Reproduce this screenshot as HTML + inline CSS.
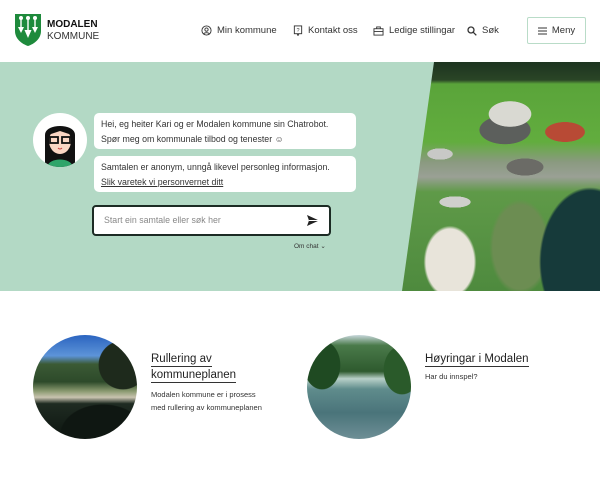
<!DOCTYPE html>
<html><head><meta charset="utf-8">
<style>
*{margin:0;padding:0;box-sizing:border-box}
body{width:600px;height:480px;background:#fff;font-family:"Liberation Sans",sans-serif;color:#222;position:relative;overflow:hidden}
.nav{position:absolute;top:25px;font-size:9.5px;color:#333;display:flex;align-items:center;gap:5px}
.hero{position:absolute;left:0;top:62px;width:600px;height:229px;background:#b3d9c5}
.photo{position:absolute;left:0;top:62px;width:600px;height:229px;clip-path:polygon(434px 0,600px 0,600px 229px,402px 229px);
background:
linear-gradient(160deg,transparent 0 40%,transparent 40%) ,
radial-gradient(ellipse 30px 18px at 510px 52px,#d9d9d2 0 70%,transparent 72%),
radial-gradient(ellipse 36px 20px at 505px 68px,#5c5f5c 0 70%,transparent 72%),
radial-gradient(ellipse 28px 14px at 565px 70px,#b84a35 0 70%,transparent 72%),
radial-gradient(ellipse 18px 8px at 440px 92px,#c8c8c6 0 70%,transparent 72%),
radial-gradient(ellipse 26px 12px at 525px 105px,#6b6b66 0 70%,transparent 72%),
radial-gradient(ellipse 22px 8px at 455px 140px,#cfcfcc 0 70%,transparent 72%),
radial-gradient(ellipse 75px 110px at 590px 200px,#163a3a 0 65%,transparent 68%),
radial-gradient(ellipse 45px 70px at 520px 185px,#6c8d52 0 60%,transparent 68%),
radial-gradient(ellipse 40px 55px at 450px 200px,#e8e4da 0 60%,transparent 66%),
linear-gradient(180deg,#1d3420 0,#2a4526 18px,#5aa43a 22px,#62ad3e 80px,#8a9a80 100px,#9aa095 115px,#5f9a48 130px,#4e8a3e 229px)}
.bubble{position:absolute;background:#fff;border-radius:5px;font-size:8.8px;line-height:14.5px;color:#333;padding:4px 7px}
.circ{position:absolute;width:104px;height:104px;border-radius:50%;overflow:hidden}
h3{font-weight:normal;font-size:11.5px;color:#222;line-height:16px}
h3 span{border-bottom:1.5px solid #333;padding-bottom:1px}
</style></head><body>
<svg style="position:absolute;left:14px;top:13px" width="28" height="34" viewBox="0 0 28 34">
<path d="M1 1H27V18C27 26 20 31 14 33C8 31 1 26 1 18Z" fill="#1e8a3c"/>
<g fill="#fff"><circle cx="7" cy="5" r="2"/><circle cx="14" cy="5" r="2"/><circle cx="21" cy="5" r="2"/>
<rect x="6.3" y="6" width="1.4" height="9"/><rect x="13.3" y="6" width="1.4" height="12"/><rect x="20.3" y="6" width="1.4" height="9"/>
<path d="M4 14H10L7 20Z"/><path d="M18 14H24L21 20Z"/><path d="M10.5 17H17.5L14 25Z"/></g></svg>
<div style="position:absolute;left:47px;top:19px;font-size:10px;font-weight:bold;color:#111">MODALEN</div>
<div style="position:absolute;left:47px;top:31px;font-size:10px;color:#333">KOMMUNE</div>
<div class="nav" style="left:201px"><svg width="11" height="11" viewBox="0 0 12 12" fill="none" stroke="#333"><circle cx="6" cy="6" r="5"/><circle cx="6" cy="5" r="1.8"/><path d="M3 9.5C4 8 8 8 9 9.5"/></svg>Min kommune</div>
<div class="nav" style="left:293px"><svg width="10" height="11" viewBox="0 0 10 12" fill="none" stroke="#333"><rect x="1" y="1" width="8" height="8.5"/><path d="M4 9.5L5 11.5L6 9.5"/><text x="3.4" y="7.5" font-size="6" fill="#333" stroke="none">?</text></svg>Kontakt oss</div>
<div class="nav" style="left:373px"><svg width="11" height="10" viewBox="0 0 12 11" fill="none" stroke="#333"><rect x="1" y="3" width="10" height="7"/><path d="M4 3V1H8V3M1 6H11"/></svg>Ledige stillingar</div>
<div class="nav" style="left:467px"><svg width="10" height="10" viewBox="0 0 10 10" fill="none" stroke="#333" stroke-width="1.3"><circle cx="4" cy="4" r="3"/><path d="M6.3 6.3L9.3 9.3"/></svg>Søk</div>
<div style="position:absolute;left:527px;top:17px;width:59px;height:27px;border:1px solid #b9dcc8;border-radius:2px;font-size:9.5px;color:#333;display:flex;align-items:center;justify-content:center;gap:5px"><svg width="9" height="8"><path d="M0 1H9M0 4H9M0 7H9" stroke="#333"/></svg>Meny</div>

<div class="hero"></div>
<div class="photo"></div>

<div style="position:absolute;left:33px;top:113px;width:54px;height:54px;border-radius:50%;background:#fff;overflow:hidden">
<svg width="54" height="54" viewBox="0 0 54 54"><path d="M12 54V22C12 10 42 10 42 22V54Z" fill="#111"/><ellipse cx="27" cy="28" rx="11" ry="13" fill="#fbd6c4"/><path d="M15 22C18 12 36 12 39 22L27 18Z" fill="#111"/><rect x="17" y="24" width="8" height="6" fill="none" stroke="#111" stroke-width="1.8"/><rect x="29" y="24" width="8" height="6" fill="none" stroke="#111" stroke-width="1.8"/><path d="M14 54C16 44 38 44 40 54Z" fill="#2fa56a"/><path d="M25 35Q27 37 29 35" stroke="#c44" fill="none"/></svg></div>
<div class="bubble" style="left:94px;top:113px;width:262px;height:36px">Hei, eg heiter Kari og er Modalen kommune sin Chatrobot.<br>Spør meg om kommunale tilbod og tenester ☺</div>
<div class="bubble" style="left:94px;top:156px;width:262px;height:36px">Samtalen er anonym, unngå likevel personleg informasjon.<br><span style="text-decoration:underline">Slik varetek vi personvernet ditt</span></div>
<div style="position:absolute;left:92px;top:205px;width:239px;height:31px;background:#fff;border:2px solid #1c2b24;border-radius:4px;font-size:8.8px;color:#888;padding:8px 10px">Start ein samtale eller søk her
<svg style="position:absolute;right:9px;top:7px" width="14" height="13" viewBox="0 0 14 13"><path d="M1 1L13 6.5L1 12L3 6.5Z" fill="#222"/><path d="M3 6.5H13" stroke="#fff" stroke-width="1"/></svg></div>
<div style="position:absolute;left:294px;top:242px;font-size:6.5px;color:#333">Om chat ⌄</div>

<div class="circ" style="left:33px;top:335px;background:
radial-gradient(ellipse 70px 50px at 70px 100px,#0f1712 0 60%,transparent 62%),
radial-gradient(ellipse 40px 40px at 90px 30px,#1e2a1c 0 60%,transparent 62%),
linear-gradient(180deg,#2b64c0 0,#5d94d8 20%,#3b5a35 28%,#2d4a2a 45%,#8a9a70 54%,#c9c4b0 60%,#1f2b22 66%,#0d1510 100%)"></div>
<h3 style="position:absolute;left:151px;top:351px"><span>Rullering av</span><br><span>kommuneplanen</span></h3>
<div style="position:absolute;left:151px;top:388px;font-size:7.5px;line-height:13px;color:#333">Modalen kommune er i prosess<br>med rullering av kommuneplanen</div>

<div class="circ" style="left:307px;top:335px;background:
radial-gradient(ellipse 30px 40px at 15px 30px,#1f4a22 0 60%,transparent 62%),
radial-gradient(ellipse 30px 40px at 95px 35px,#2a5a2a 0 60%,transparent 62%),
linear-gradient(180deg,#c8d8dc 0,#4a7a4a 10%,#2e5a2e 35%,#b8d0c8 42%,#5f8c8c 52%,#4a747a 75%,#6e8f96 100%)"></div>
<h3 style="position:absolute;left:425px;top:351px"><span>Høyringar i Modalen</span></h3>
<div style="position:absolute;left:425px;top:372px;font-size:7.5px;color:#333">Har du innspel?</div>
</body></html>
